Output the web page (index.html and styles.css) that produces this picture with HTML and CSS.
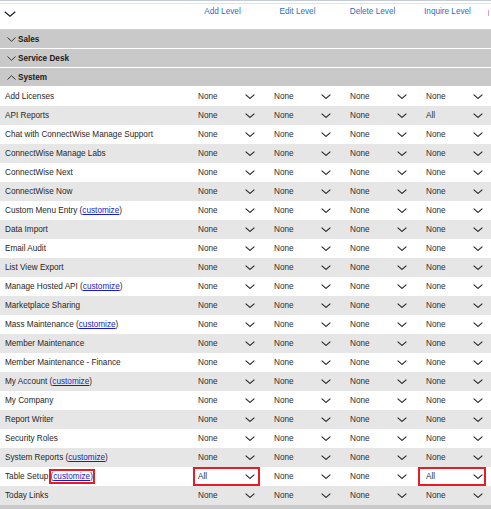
FILE: index.html
```html
<!DOCTYPE html>
<html>
<head>
<meta charset="utf-8">
<link rel="stylesheet" href="styles.css">
</head>
<body>
<div class="page">
  <div class="topline"></div>
  <div class="topgap"></div>
  <div class="hline"></div>
  <div class="head">
    <div class="head-first"><svg class="chev-big" width="12" height="6" viewBox="0 0 12 6"><path d="M0.7 0.7 L6 5.2 L11.3 0.7" fill="none" stroke="#222" stroke-width="1.3"/></svg></div>
    <div class="hcell">Add Level</div>
    <div class="hcell">Edit Level</div>
    <div class="hcell">Delete Level</div>
    <div class="hcell">Inquire Level</div>
    <div class="hcell5"><span class="hmark"></span></div>
  </div>
  <div class="hline2"></div>

  <div class="section"><svg class="chev-s" width="9" height="5" viewBox="0 0 9 5"><path d="M0.5 0.5 L4.5 4.3 L8.5 0.5" fill="none" stroke="#333" stroke-width="1"/></svg><span>Sales</span></div>
  <div class="section"><svg class="chev-s" width="9" height="5" viewBox="0 0 9 5"><path d="M0.5 0.5 L4.5 4.3 L8.5 0.5" fill="none" stroke="#333" stroke-width="1"/></svg><span>Service Desk</span></div>
  <div class="section"><svg class="chev-s" width="9" height="5" viewBox="0 0 9 5"><path d="M0.5 4.5 L4.5 0.7 L8.5 4.5" fill="none" stroke="#333" stroke-width="1"/></svg><span>System</span></div>

  <div class="rows" id="rows"></div>
  <div class="bottom"></div>
</div>
<script src="app.js"></script>
</body>
</html>
```
FILE: app.js
```js
var rows = [
  ["Add Licenses", 0],
  ["API Reports", 0, {4: "All"}],
  ["Chat with ConnectWise Manage Support", 0],
  ["ConnectWise Manage Labs", 0],
  ["ConnectWise Next", 0],
  ["ConnectWise Now", 0],
  ["Custom Menu Entry", 1],
  ["Data Import", 0],
  ["Email Audit", 0],
  ["List View Export", 0],
  ["Manage Hosted API", 1],
  ["Marketplace Sharing", 0],
  ["Mass Maintenance", 1],
  ["Member Maintenance", 0],
  ["Member Maintenance - Finance", 0],
  ["My Account", 1],
  ["My Company", 0],
  ["Report Writer", 0],
  ["Security Roles", 0],
  ["System Reports", 1],
  ["Table Setup", 2, {1: "All", 4: "All"}, true],
  ["Today Links", 0]
];
var chev = '<svg class="chev" width="10" height="5" viewBox="0 0 10 5"><path d="M0.6 0.6 L5 4.4 L9.4 0.6" fill="none" stroke="#2a2a2a" stroke-width="1.15"/></svg>';
var html = "";
rows.forEach(function (r, i) {
  var vals = r[2] || {};
  var cls = i % 2 ? "row alt" : "row";
  html += '<div class="' + cls + '"><div class="label">' + r[0];
  if (r[1] === 1) html += ' (<a href="#" class="cust">customize</a>)';
  if (r[1] === 2) html += ' <span class="hlbox">(<a href="#" class="cust">customize</a>)</span>';
  html += '</div>';
  for (var c = 1; c <= 4; c++) {
    var v = vals[c] || "None";
    var sc = "sel";
    if (r[3] && c === 1) sc += " hl1";
    if (r[3] && c === 4) sc += " hl4";
    html += '<div class="cell"><div class="' + sc + '"><span>' + v + '</span>' + chev + '</div></div>';
  }
  html += '</div>';
});
document.getElementById("rows").innerHTML = html;
```
FILE: styles.css
```css
html, body {
  margin: 0;
  padding: 0;
  background: #fff;
}
.page {
  width: 491px;
  height: 509px;
  overflow: hidden;
  font-family: "Liberation Sans", Arial, sans-serif;
  font-size: 8.2px;
  color: #222;
}
.topline { height: 1px; background: #c3ccd8; }
.topgap { height: 2px; }
.hline { height: 1px; background: #e2e2e2; }
.head {
  height: 25px;
  display: flex;
  white-space: nowrap;
}
.head-first {
  flex: 0 0 185px;
}
.chev-big {
  display: block;
  margin: 7px 0 0 4px;
}
.hcell {
  flex: 0 0 75px;
  text-align: center;
  color: #1f6fc8;
  padding-top: 2px;
  line-height: 12px;
}
.hcell5 {
  flex: 0 0 6px;
  padding: 6px 0 0 3px;
}
.hmark {
  display: block;
  width: 1px;
  height: 6px;
  background: #c4a6dc;
}
.hline2 { height: 1px; background: #d0d0d0; }
.section {
  height: 18px;
  border-bottom: 1px solid #fff;
  background: #c9c9c9;
  display: flex;
  align-items: center;
  font-weight: bold;
  color: #1a1a1a;
}
.chev-s {
  display: block;
  margin: 0 2px 0 7px;
}
.row {
  display: grid;
  grid-template-columns: 194px repeat(4, 76px);
  height: 19px;
  line-height: 18px;
  background: #fff;
  white-space: nowrap;
}
.row.alt { background: #e6e6e6; }
.label {
  padding: 1px 0 0 5px;
  color: #262626;
}
.cust {
  color: #1a1ad0;
  text-decoration: underline;
}
.hlbox {
  display: inline-block;
  line-height: 11px;
  border: 2px solid #e81c24;
  margin-left: -2px;
}
.cell {
  position: relative;
}
.sel {
  position: relative;
  width: 66px;
  height: 19px;
  box-sizing: border-box;
  padding: 1px 5px 0 4px;
  display: flex;
  align-items: center;
  justify-content: space-between;
  color: #2e2e2e;
}
.chev { display: block; margin-top: -1px; }
.hl1::after, .hl4::after {
  content: "";
  position: absolute;
  top: 0;
  bottom: 0;
  border: 2px solid #e81c24;
}
.hl1::after { left: -1px; right: 0; }
.hl4::after { left: -4px; right: 2px; }
.bottom {
  height: 4px;
  background: #cacaca;
}
```
